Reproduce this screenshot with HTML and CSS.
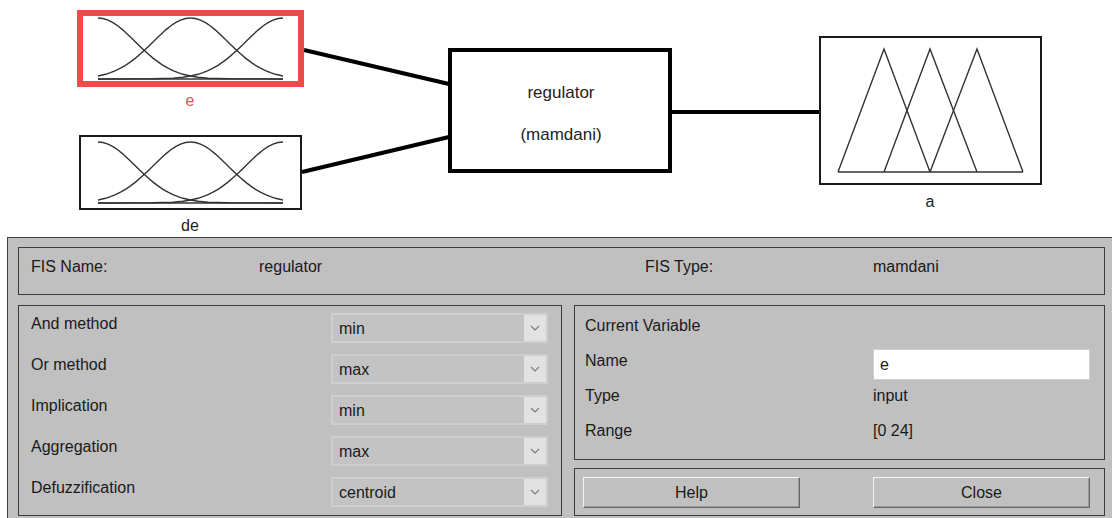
FILE: index.html
```html
<!DOCTYPE html>
<html lang="en">
<head>
  <meta charset="UTF-8" />
  <meta name="viewport" content="width=device-width, initial-scale=1" />
  <title>Fuzzy Logic Designer: regulator</title>
  <link rel="stylesheet" href="styles.css">
</head>
<body>
  <!-- Diagrama del sistema: entradas, regulador y salida -->
  <svg class="diagram" width="1112" height="237" viewBox="0 0 1112 237">
    <defs>
      <path id="half" d="M0,18 L5,18.5 L10,20.1 L15,22.7 L20,26 L25,30.1 L30,34.7 L35,39.5 L40,44.4 L45,49.2 L50,53.8 L55,58.1 L60,61.9 L65,65.3 L70,68.2 L75,70.6 L80,72.7 L85,74.3 L92.5,76 L100,77.2 L110,78.2 L130,78.8 L185,79" />
      <clipPath id="mfclip">
        <rect x="98" y="10" width="185" height="75" />
      </clipPath>
    </defs>

    <g class="wires">
      <line x1="304" y1="50" x2="449" y2="84" />
      <line x1="302" y1="172" x2="449" y2="137" />
      <line x1="671" y1="112" x2="820" y2="112" />
    </g>

    <!-- entrada e (seleccionada) -->
    <rect class="box selected" x="80" y="13" width="221" height="71" />
    <g class="mf" clip-path="url(#mfclip)">
      <use href="#half" transform="translate(98,0)" />
      <use href="#half" transform="translate(190.5,0)" />
      <use href="#half" transform="translate(190.5,0) scale(-1,1)" />
      <use href="#half" transform="translate(283,0) scale(-1,1)" />
      <line x1="98" y1="79" x2="283" y2="79" />
    </g>
    <text class="label red" x="190" y="106">e</text>

    <!-- entrada de -->
    <rect class="box" x="80" y="136" width="221" height="73" />
    <g transform="translate(0,124)">
      <g class="mf" clip-path="url(#mfclip)">
        <use href="#half" transform="translate(98,0)" />
        <use href="#half" transform="translate(190.5,0)" />
        <use href="#half" transform="translate(190.5,0) scale(-1,1)" />
        <use href="#half" transform="translate(283,0) scale(-1,1)" />
        <line x1="98" y1="79" x2="283" y2="79" />
      </g>
    </g>
    <text class="label" x="190" y="231">de</text>

    <!-- regulador -->
    <rect class="box thick" x="450" y="50" width="220" height="121" />
    <text class="label big" x="561" y="98">regulator</text>
    <text class="label big" x="561" y="140">(mamdani)</text>

    <!-- salida a -->
    <rect class="box" x="820" y="37" width="221" height="147" />
    <g class="mf">
      <polyline points="838,172 884,49 930,172" />
      <polyline points="884,172 930,49 977,172" />
      <polyline points="930,172 977,49 1023,172" />
      <line x1="838" y1="172" x2="1023" y2="172" />
    </g>
    <text class="label" x="930" y="207">a</text>
  </svg>

  <div class="window">
    <div class="panel fis-name">
      <span>FIS Name:</span>
      <span>regulator</span>
      <span>FIS Type:</span>
      <span>mamdani</span>
    </div>

    <div class="main">
      <div class="panel methods">
        <div class="row">
          <span class="row-label">And method</span>
          <div class="select"><span>min</span><i class="arrow"><svg width="10" height="6" viewBox="0 0 10 6"><polyline points="1,1 5,5 9,1" /></svg></i></div>
        </div>
        <div class="row">
          <span class="row-label">Or method</span>
          <div class="select"><span>max</span><i class="arrow"><svg width="10" height="6" viewBox="0 0 10 6"><polyline points="1,1 5,5 9,1" /></svg></i></div>
        </div>
        <div class="row">
          <span class="row-label">Implication</span>
          <div class="select"><span>min</span><i class="arrow"><svg width="10" height="6" viewBox="0 0 10 6"><polyline points="1,1 5,5 9,1" /></svg></i></div>
        </div>
        <div class="row">
          <span class="row-label">Aggregation</span>
          <div class="select"><span>max</span><i class="arrow"><svg width="10" height="6" viewBox="0 0 10 6"><polyline points="1,1 5,5 9,1" /></svg></i></div>
        </div>
        <div class="row">
          <span class="row-label">Defuzzification</span>
          <div class="select"><span>centroid</span><i class="arrow"><svg width="10" height="6" viewBox="0 0 10 6"><polyline points="1,1 5,5 9,1" /></svg></i></div>
        </div>
      </div>

      <div class="side">
        <div class="panel variable">
          <span>Current Variable</span>
          <span></span>
          <span>Name</span>
          <input class="name-input" type="text" value="e" />
          <span>Type</span>
          <span>input</span>
          <span>Range</span>
          <span>[0 24]</span>
        </div>
        <div class="panel buttons">
          <button type="button">Help</button>
          <button type="button">Close</button>
        </div>
      </div>
    </div>
  </div>
</body>
</html>
```

FILE: styles.css
```css
* {
  margin: 0;
  padding: 0;
  box-sizing: border-box;
}

body {
  font-family: 'Liberation Sans', Arial, sans-serif;
  font-size: 16px;
  color: #1a1a1a;
  background: #ffffff;
  overflow: hidden;
}

/* Diagrama */
.diagram {
  display: block;
}

.wires line {
  stroke: #000;
  stroke-width: 4;
}

.box {
  fill: #ffffff;
  stroke: #1a1a1a;
  stroke-width: 2;
}

.box.thick {
  stroke: #000;
  stroke-width: 4;
}

.box.selected {
  stroke: #f24a4a;
  stroke-width: 6;
}

.mf use,
.mf line,
.mf polyline {
  fill: none;
  stroke: #333;
  stroke-width: 1.4;
}

.label {
  font-family: 'Liberation Sans', Arial, sans-serif;
  font-size: 16px;
  fill: #222;
  text-anchor: middle;
}

.label.big {
  font-size: 17px;
}

.label.red {
  fill: #e8504f;
}

/* Ventana inferior */
.window {
  margin-left: 7px;
  border-top: 1px solid #404040;
  border-left: 1px solid #404040;
  background: #c0c0c0;
  padding: 9px 7px 10px 10px;
}

.panel {
  border: 1px solid #3c3c3c;
}

.fis-name {
  height: 48px;
  padding: 11px 0 0 12px;
  line-height: 16px;
  display: grid;
  grid-template-columns: 228px 386px 228px 1fr;
}

.main {
  display: grid;
  grid-template-columns: 544px 1fr;
  gap: 12px;
  margin-top: 10px;
}

.methods {
  padding: 7px 13px 8px 12px;
  display: flex;
  flex-direction: column;
  gap: 11px;
}

.row {
  display: flex;
  justify-content: space-between;
  align-items: flex-start;
}

.row-label {
  padding-top: 3px;
  line-height: 16px;
}

.select {
  width: 217px;
  height: 30px;
  border: 2px solid #cecece;
  background: #c3c3c3;
  display: flex;
}

.select span {
  flex: 1;
  padding: 2px 0 0 6px;
  line-height: 24px;
}

.arrow {
  width: 22px;
  background: #e2e2e2;
  display: flex;
  align-items: center;
  justify-content: center;
}

.arrow polyline {
  fill: none;
  stroke: #7c7c7c;
  stroke-width: 1.2;
}

.side {
  display: flex;
  flex-direction: column;
  gap: 8px;
}

.variable {
  height: 155px;
  padding: 2px 14px 0 10px;
  display: grid;
  grid-template-columns: 288px 1fr;
  grid-template-rows: repeat(4, 35px);
  line-height: 35px;
}

.name-input {
  align-self: start;
  margin-top: 6px;
  width: 217px;
  height: 31px;
  padding: 0 6px;
  border: 1px solid #d0d0d0;
  background: #ffffff;
  font: inherit;
  color: #1a1a1a;
  line-height: 29px;
}

.buttons {
  height: 48px;
  padding: 8px 14px 0 8px;
  display: flex;
  justify-content: space-between;
  align-items: flex-start;
}

button {
  width: 217px;
  height: 31px;
  background: #c0c0c0;
  border: 1px solid;
  border-color: #f4f4f4 #666666 #666666 #f4f4f4;
  box-shadow: inset -1px -1px #9c9c9c;
  font: inherit;
  color: #1a1a1a;
  cursor: pointer;
}
```
